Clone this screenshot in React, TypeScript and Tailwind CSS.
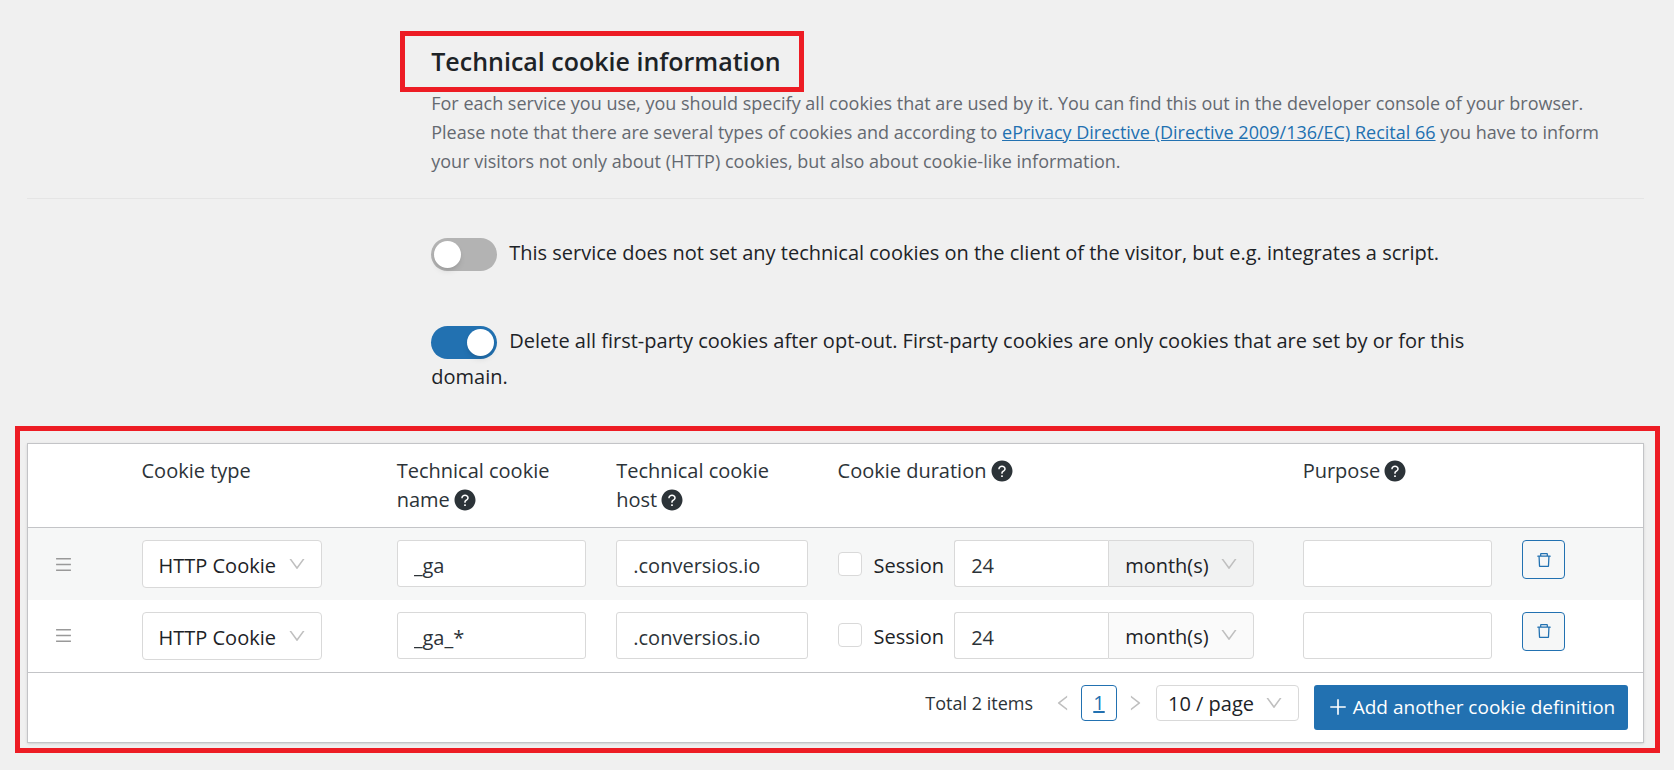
import { useState } from "react";
import {
  AiFillQuestionCircle,
  AiOutlineDelete,
  AiOutlineDown,
  AiOutlineLeft,
  AiOutlineMenu,
  AiOutlinePlus,
  AiOutlineRight,
} from "react-icons/ai";

const inputClass =
  "block w-full h-[47px] rounded-[3px] border border-[#d9d9d9] bg-white px-4 pt-1 text-[20px] text-[#2c3338] outline-none";

function Select({
  label,
  options,
  className,
}: {
  label: string;
  options: string[];
  className: string;
}) {
  return (
    <div className="relative">
      <select
        aria-label={label}
        className={`block w-full appearance-none border border-[#d9d9d9] text-[20px] text-[#1d2327] outline-none ${className}`}
      >
        {options.map((option) => (
          <option key={option}>{option}</option>
        ))}
      </select>
      <AiOutlineDown className="pointer-events-none absolute right-[15px] top-1/2 -translate-y-1/2 text-[20px] text-[#bfbfbf]" />
    </div>
  );
}

function Toggle({ text, initial }: { text: string; initial: boolean }) {
  const [on, setOn] = useState(initial);

  return (
    <label className="block text-[20px] leading-9 text-[#1d2327]">
      <input
        type="checkbox"
        role="switch"
        checked={on}
        onChange={() => setOn(!on)}
        className="relative mr-3 inline-block h-[33px] w-[66px] appearance-none rounded-full bg-[#b3b3b3] align-middle before:absolute before:left-[3px] before:top-[3px] before:size-[27px] before:rounded-full before:bg-white before:shadow-md checked:bg-[#2271b1] checked:before:left-9"
      />
      {text}
    </label>
  );
}

function Help() {
  return (
    <AiFillQuestionCircle className="-ml-0.5 mb-[3px] inline-block align-middle text-[24px] text-[#2c3338]" />
  );
}

const cookies = [
  { name: "_ga", host: ".conversios.io", duration: "24" },
  { name: "_ga_*", host: ".conversios.io", duration: "24" },
];

function CookieTable() {
  return (
    <div className="border border-[#c3c4c7] bg-white shadow-sm">
      <table className="w-full table-fixed border-collapse text-[20px] text-[#2c3338]">
        <colgroup>
          <col className="w-[6.1%]" />
          <col className="w-[15.8%]" />
          <col className="w-[13.6%]" />
          <col className="w-[13.7%]" />
          <col className="w-[28.8%]" />
          <col className="w-[13.6%]" />
          <col />
        </colgroup>
        <thead>
          <tr className="border-b border-[#c3c4c7] text-left align-top leading-[29px]">
            <td />
            <th className="px-[15px] pt-3 pb-3 font-normal">Cookie type</th>
            <th className="px-[15px] pt-3 pb-3 font-normal">
              Technical cookie name <Help />
            </th>
            <th className="px-[15px] pt-3 pb-3 font-normal">
              Technical cookie host <Help />
            </th>
            <th className="px-[15px] pt-3 pb-3 font-normal">
              Cookie duration <Help />
            </th>
            <th className="px-[15px] pt-3 pb-3 font-normal">
              Purpose <Help />
            </th>
            <td />
          </tr>
        </thead>
        <tbody>
          {cookies.map((cookie) => (
            <tr key={cookie.name} className="h-[72px] align-top odd:bg-[#f6f7f7]">
              <td className="pl-[26px] align-middle">
                <button aria-label="Move row" className="block text-[#999]">
                  <AiOutlineMenu className="text-[19px]" />
                </button>
              </td>
              <td className="px-[15px] pt-3">
                <div className="w-[180px] max-w-full">
                  <Select
                    label="Cookie type"
                    options={["HTTP Cookie", "Local Storage", "Session Storage"]}
                    className="h-12 rounded-[4px] bg-white pt-1 pl-4"
                  />
                </div>
              </td>
              <td className="px-[15px] pt-3">
                <input aria-label="Technical cookie name" defaultValue={cookie.name} className={inputClass} />
              </td>
              <td className="px-[15px] pt-3">
                <input aria-label="Technical cookie host" defaultValue={cookie.host} className={inputClass} />
              </td>
              <td className="px-[15px] pt-3">
                <div className="flex items-center">
                  <label className="flex items-center gap-3 pr-2.5 text-[#1d2327]">
                    <input
                      type="checkbox"
                      className="size-6 appearance-none rounded-[4px] border border-[#d9d9d9] bg-white checked:bg-[#2271b1]"
                    />
                    <span className="pt-1">Session</span>
                  </label>
                  <input
                    aria-label="Cookie duration"
                    defaultValue={cookie.duration}
                    className="h-[47px] w-[154px] min-w-0 rounded-l-[3px] border border-r-0 border-[#d9d9d9] bg-white px-4 pt-1 outline-none"
                  />
                  <div className="w-[146px]">
                    <Select
                      label="Duration unit"
                      options={["month(s)", "day(s)", "hour(s)"]}
                      className="h-[47px] rounded-r-[4px] bg-black/2 pt-1 pl-4"
                    />
                  </div>
                </div>
              </td>
              <td className="px-[15px] pt-3">
                <input aria-label="Purpose" className={inputClass} />
              </td>
              <td className="px-[15px] pt-3">
                <button
                  aria-label="Delete"
                  className="flex h-[39px] w-[43px] items-center justify-center rounded-[4px] border border-[#2271b1] bg-[#f6f7f7] text-[#2271b1]"
                >
                  <AiOutlineDelete className="text-[18px]" />
                </button>
              </td>
            </tr>
          ))}
        </tbody>
      </table>

      <div className="flex items-start justify-end border-t border-[#c3c4c7] px-[15px] pt-3 pb-3 text-[#2c3338]">
        <span className="mr-5 text-[18px] leading-9">Total 2 items</span>
        <button aria-label="Previous page" className="flex h-9 items-center text-[#bfbfbf]">
          <AiOutlineLeft className="text-[20px]" />
        </button>
        <button className="mx-2 h-9 w-9 rounded-[4px] border border-[#2271b1] text-[20px] leading-8 text-[#2271b1] underline">
          1
        </button>
        <button aria-label="Next page" className="mr-[11px] flex h-9 items-center text-[#bfbfbf]">
          <AiOutlineRight className="text-[20px]" />
        </button>
        <div className="mr-[15px] w-[143px]">
          <Select
            label="Items per page"
            options={["10 / page", "20 / page", "50 / page"]}
            className="h-9 rounded-[4px] bg-white pt-0.5 pl-[11px]"
          />
        </div>
        <button className="flex h-[45px] w-[314px] items-center justify-center gap-1 rounded-[3px] bg-[#2271b1] text-[19px] text-white">
          <AiOutlinePlus className="text-[22px]" />
          Add another cookie definition
        </button>
      </div>
    </div>
  );
}

export default function App() {
  return (
    <main className="min-h-screen bg-[#f0f0f0] pt-[31px] pr-[14px] pb-[18px] pl-[15px] font-['Open_Sans','Noto_Sans',sans-serif]">
      <section className="mr-4 ml-3 grid grid-cols-12 border-b border-[#e5e5e5] pb-[22px]">
        <div className="col-span-9 col-start-4">
          <h2 className="-ml-[31px] flex h-[61px] w-[404px] items-center border-[5px] border-[#ed1c24] pl-[26px] text-[25px] font-semibold whitespace-nowrap text-[#1d2327]">
            Technical cookie information
          </h2>
          <p className="-mt-[3px] pr-6 text-[18px] leading-[29px] text-[#646970]">
            For each service you use, you should specify all cookies that are used by it. You can
            find this out in the developer console of your browser. Please note that there are
            several types of cookies and according to{" "}
            <a href="#" className="text-[#2271b1] underline">
              ePrivacy Directive (Directive 2009/136/EC) Recital 66
            </a>{" "}
            you have to inform your visitors not only about (HTTP) cookies, but also about
            cookie-like information.
          </p>
        </div>
      </section>

      <section className="mr-4 ml-3 grid grid-cols-12 pt-9 pb-[31px]">
        <div className="col-span-8 col-start-4 flex flex-col gap-[52px]">
          <Toggle
            initial={false}
            text="This service does not set any technical cookies on the client of the visitor, but e.g. integrates a script."
          />
          <Toggle
            initial
            text="Delete all first-party cookies after opt-out. First-party cookies are only cookies that are set by or for this domain."
          />
        </div>
      </section>

      <section className="border-[5px] border-[#ed1c24] pt-3 pr-[11px] pb-[5px] pl-[7px]">
        <CookieTable />
      </section>
    </main>
  );
}
